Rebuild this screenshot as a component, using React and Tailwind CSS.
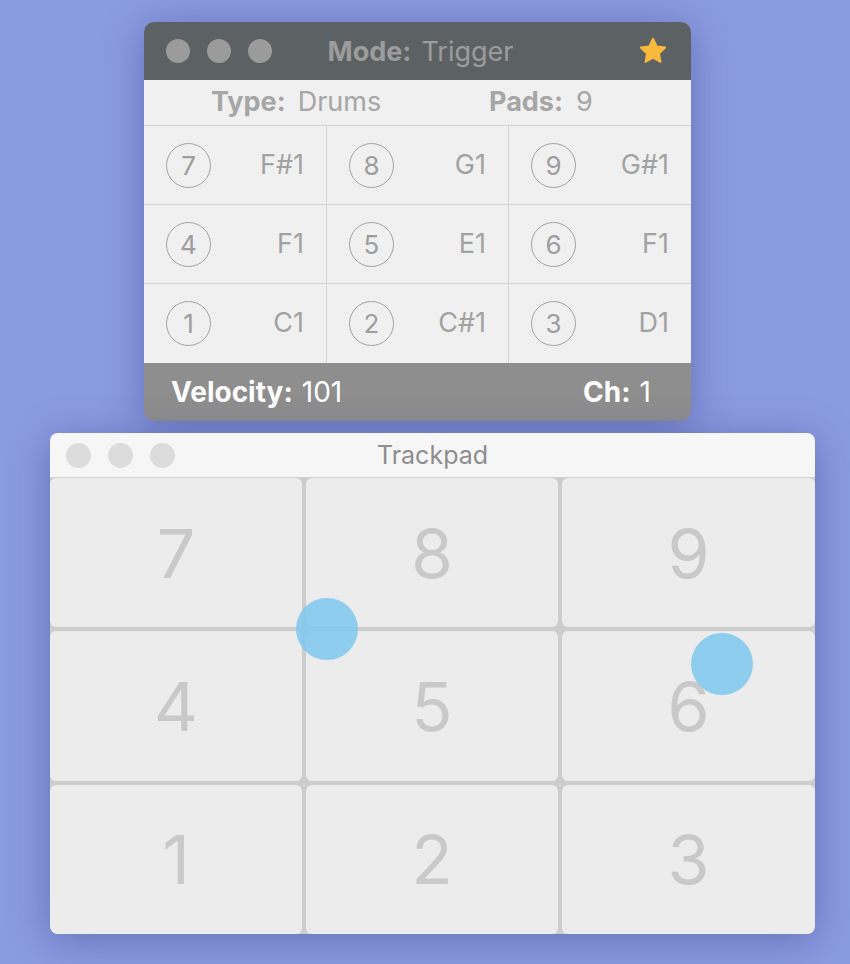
import React from "react";

const pads = [
  { n: 7, note: "F#1" },
  { n: 8, note: "G1" },
  { n: 9, note: "G#1" },
  { n: 4, note: "F1" },
  { n: 5, note: "E1" },
  { n: 6, note: "F1" },
  { n: 1, note: "C1" },
  { n: 2, note: "C#1" },
  { n: 3, note: "D1" },
];

function Star() {
  return (
    <svg width="30" height="30" viewBox="0 0 24 24">
      <path
        d="M12 2.2l2.95 6.2 6.75.85-4.95 4.7 1.25 6.7L12 17.35 5.999 20.65l1.25-6.7L2.3 9.25l6.75-.85z"
        fill="#f8b93c"
        stroke="#f8b93c"
        strokeWidth="1.6"
        strokeLinejoin="round"
      />
    </svg>
  );
}

export default function App() {
  return (
    <div
      className="w-[850px] h-[964px] overflow-hidden bg-[#8b9be1] flex flex-col"
      style={{ fontFamily: "Inter, 'Liberation Sans', sans-serif" }}
    >
      {/* Top window */}
      <div className="ml-[144px] mt-[22px] w-[547px] rounded-[10px] overflow-hidden shadow-[0_6px_40px_rgba(50,60,130,0.45)]">
        <div className="h-[58px] bg-[#5c6263] grid grid-cols-[1fr_auto_1fr] items-center px-[22px]">
          <div className="flex gap-[17px]">
            <div className="w-[24px] h-[24px] rounded-full bg-[#9b9b9b]" />
            <div className="w-[24px] h-[24px] rounded-full bg-[#9b9b9b]" />
            <div className="w-[24px] h-[24px] rounded-full bg-[#9b9b9b]" />
          </div>
          <div className="text-[27px] text-[#9c9c9c] pl-[6px] leading-none flex gap-[10px]">
            <span className="font-bold">Mode:</span>
            <span>Trigger</span>
          </div>
          <div className="flex justify-end pr-[1px]">
            <Star />
          </div>
        </div>
        <div className="h-[46px] bg-[#f0f0f0] flex items-center text-[27px] text-[#a6a6a6] border-b border-[#d3d3d3]">
          <div className="ml-[67px] w-[278px] flex gap-[12px]">
            <span className="font-bold">Type:</span>
            <span>Drums</span>
          </div>
          <div className="flex gap-[13px]">
            <span className="font-bold">Pads:</span>
            <span>9</span>
          </div>
        </div>
        <div className="grid grid-cols-[183px_182px_182px] bg-[#f0f0f0]">
          {pads.map((p, i) => (
            <div
              key={i}
              className={`h-[79px] flex items-center justify-between pl-[22px] pr-[22px] ${
                i % 3 !== 2 ? "border-r border-[#d3d3d3]" : ""
              } ${i < 6 ? "border-b border-[#d3d3d3]" : ""}`}
            >
              <div className="w-[45px] h-[45px] rounded-full border-[1.5px] border-[#a2a2a2] flex items-center justify-center text-[26px] text-[#9e9e9e]">
                {p.n}
              </div>
              <div className="text-[27px] text-[#a2a2a2]">{p.note}</div>
            </div>
          ))}
        </div>
        <div className="h-[58px] bg-[#8f8e8e] flex items-center justify-between pl-[27px] pr-[40px] text-[28px] text-white">
          <div className="flex gap-[9px]">
            <span className="font-bold">Velocity:</span>
            <span>101</span>
          </div>
          <div className="flex gap-[9px]">
            <span className="font-bold">Ch:</span>
            <span>1</span>
          </div>
        </div>
      </div>

      {/* Trackpad window */}
      <div className="ml-[50px] mt-[12px] w-[765px] rounded-[8px] overflow-hidden shadow-[0_6px_40px_rgba(50,60,130,0.45)]">
        <div className="h-[45px] bg-[#f6f6f6] border-b border-[#d2d2d2] grid grid-cols-[1fr_auto_1fr] items-center px-[16px]">
          <div className="flex gap-[17px]">
            <div className="w-[25px] h-[25px] rounded-full bg-[#dcdcdc]" />
            <div className="w-[25px] h-[25px] rounded-full bg-[#dcdcdc]" />
            <div className="w-[25px] h-[25px] rounded-full bg-[#dcdcdc]" />
          </div>
          <div className="text-[25px] text-[#8d8d8d] leading-none">Trackpad</div>
          <div />
        </div>
        <div className="relative h-[456px] grid grid-cols-[252px_252px_253px] grid-rows-3 gap-[4px] bg-[#cdcdcd]">
          {pads.map((p, i) => (
            <div
              key={i}
              className="rounded-[6px] bg-[#ececec] flex items-center justify-center text-[68px] text-[#c9c9c9] leading-none"
            >
              {p.n}
            </div>
          ))}
          <div className="absolute left-[246px] top-[120px] w-[62px] h-[62px] rounded-full bg-[#7fc8ef]/85" />
          <div className="absolute left-[641px] top-[155px] w-[62px] h-[62px] rounded-full bg-[#7fc8ef]/85" />
        </div>
      </div>
    </div>
  );
}
